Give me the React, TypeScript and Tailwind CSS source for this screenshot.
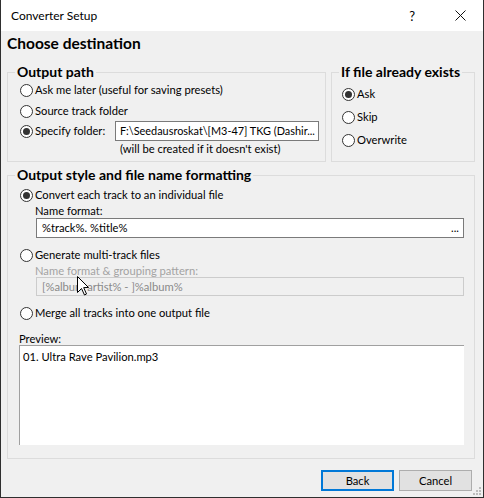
import React from "react";

function Radio({ checked, label, className = "" }: { checked?: boolean; label: string; className?: string }) {
  return (
    <div className={"flex items-center gap-[2px] " + className}>
      <span className="w-[13px] h-[13px] rounded-full border border-[#333333] bg-white flex items-center justify-center shrink-0">
        {checked && <span className="w-[7px] h-[7px] rounded-full bg-[#333333]" />}
      </span>
      <span className="whitespace-nowrap">{label}</span>
    </div>
  );
}

function Legend({ children }: { children: React.ReactNode }) {
  return (
    <legend className="ml-[7px] px-[2px] text-[14px] font-bold leading-[16px] text-black whitespace-nowrap">{children}</legend>
  );
}

export default function App() {
  return (
    <div className="w-[484px] h-[498px] bg-[#f0f0f0] border-l border-r border-b border-[#2f2f2f] flex flex-col relative font-['Lato',sans-serif] text-[11.2px] leading-[14px] text-black overflow-hidden">
      {/* Title bar */}
      <div className="h-[31px] bg-white flex items-center shrink-0">
        <span className="ml-[10px] text-[12px]">Converter Setup</span>
        <span className="ml-auto mr-[40px] text-[13px]">?</span>
        <svg width="11" height="11" viewBox="0 0 11 11" className="mr-[17px]">
          <path d="M0.5 0.5 L10.5 10.5 M10.5 0.5 L0.5 10.5" stroke="#111" strokeWidth="1" />
        </svg>
      </div>

      <div className="flex flex-col pl-[6px] pr-[8px] pt-[4px]">
        <div className="text-[15.5px] font-bold leading-[16px] h-[16px]">Choose destination</div>

        <div className="flex gap-[5px] mt-[13px] items-stretch">
          <fieldset className="w-[319px] border border-[#dcdcdc]">
            <Legend>Output path</Legend>
            <div className="pl-[12px] pr-[6px] pb-[5px]">
              <Radio label="Ask me later (useful for saving presets)" className="h-[20px]" />
              <Radio label="Source track folder" className="h-[20px] mt-[1px]" />
              <div className="flex items-center h-[20px]">
                <Radio checked label="Specify folder:" className="w-[95px]" />
                <div className="w-[204px] h-[20px] border border-[#7a7a7a] bg-white flex items-center pl-[4px] overflow-hidden whitespace-nowrap text-[10.9px]">
                  F:\Seedausroskat\[M3-47] TKG (Dashir...
                </div>
              </div>
              <div className="h-[15px] leading-[15px] pl-[100px] whitespace-nowrap">(will be created if it doesn't exist)</div>
            </div>
          </fieldset>

          <fieldset className="w-[144px] border border-[#dcdcdc]">
            <Legend>If file already exists</Legend>
            <div className="pl-[10px] pt-[4px] flex flex-col gap-[3px]">
              <Radio checked label="Ask" className="h-[20px]" />
              <Radio label="Skip" className="h-[20px]" />
              <Radio label="Overwrite" className="h-[20px]" />
            </div>
          </fieldset>
        </div>

        <fieldset className="mt-[5px] border border-[#dcdcdc]">
          <Legend>Output style and file name formatting</Legend>
          <div className="pl-[11px] pr-[10px] pt-[3px] pb-[13px] relative">
            <Radio checked label="Convert each track to an individual file" className="h-[18px] ml-[1px]" />
            <div className="h-[14px] ml-[16px]">Name format:</div>
            <div className="ml-[17px] h-[20px] border border-[#7a7a7a] bg-white flex items-center justify-between pl-[5px] pr-[4px]">
              <span>%track%. %title%</span>
              <span>...</span>
            </div>
            <Radio label="Generate multi-track files" className="h-[18px] ml-[1px] mt-[8px]" />
            <div className="h-[13px] leading-[13px] ml-[16px] text-[#a3a3a3]">Name format &amp; grouping pattern:</div>
            <div className="ml-[17px] h-[19px] border border-[#cccccc] bg-[#f0f0f0] flex items-center pl-[5px] text-[#8a8a8a]">
              [%album artist% - ]%album%
            </div>
            <Radio label="Merge all tracks into one output file" className="h-[18px] ml-[1px] mt-[8px]" />
            <div className="h-[13px] leading-[13px] mt-[10px]">Preview:</div>
            <div className="h-[100px] bg-white border-l border-t border-[#a0a0a0] pl-[3px] pt-[4px]">
              01. Ultra Rave Pavilion.mp3
            </div>

            {/* mouse cursor */}
            <svg width="13" height="20" viewBox="0 0 13 20" className="absolute left-[69px] top-[93px]">
              <path d="M0.5 0.5 L0.5 16.5 L4.5 12.5 L7.5 19 L9.5 18 L6.7 11.6 L11.5 11.5 Z" fill="white" stroke="black" strokeWidth="1" strokeLinejoin="miter" />
            </svg>
          </div>
        </fieldset>

        <div className="flex justify-end gap-[5px] mt-[11px] mr-[3px]">
          <button className="w-[73px] h-[21px] border-2 border-[#0078d7] bg-[#e1e1e1] flex items-center justify-center">Back</button>
          <button className="w-[73px] h-[21px] border border-[#adadad] bg-[#e1e1e1] flex items-center justify-center">Cancel</button>
        </div>
      </div>

      {/* resize grip */}
      <svg width="10" height="10" viewBox="0 0 10 10" className="absolute right-[1px] bottom-[1px]">
        <rect x="7" y="1" width="2" height="2" fill="#bcbcbc" />
        <rect x="4" y="4" width="2" height="2" fill="#bcbcbc" />
        <rect x="7" y="4" width="2" height="2" fill="#bcbcbc" />
        <rect x="1" y="7" width="2" height="2" fill="#bcbcbc" />
        <rect x="4" y="7" width="2" height="2" fill="#bcbcbc" />
        <rect x="7" y="7" width="2" height="2" fill="#bcbcbc" />
      </svg>
    </div>
  );
}
